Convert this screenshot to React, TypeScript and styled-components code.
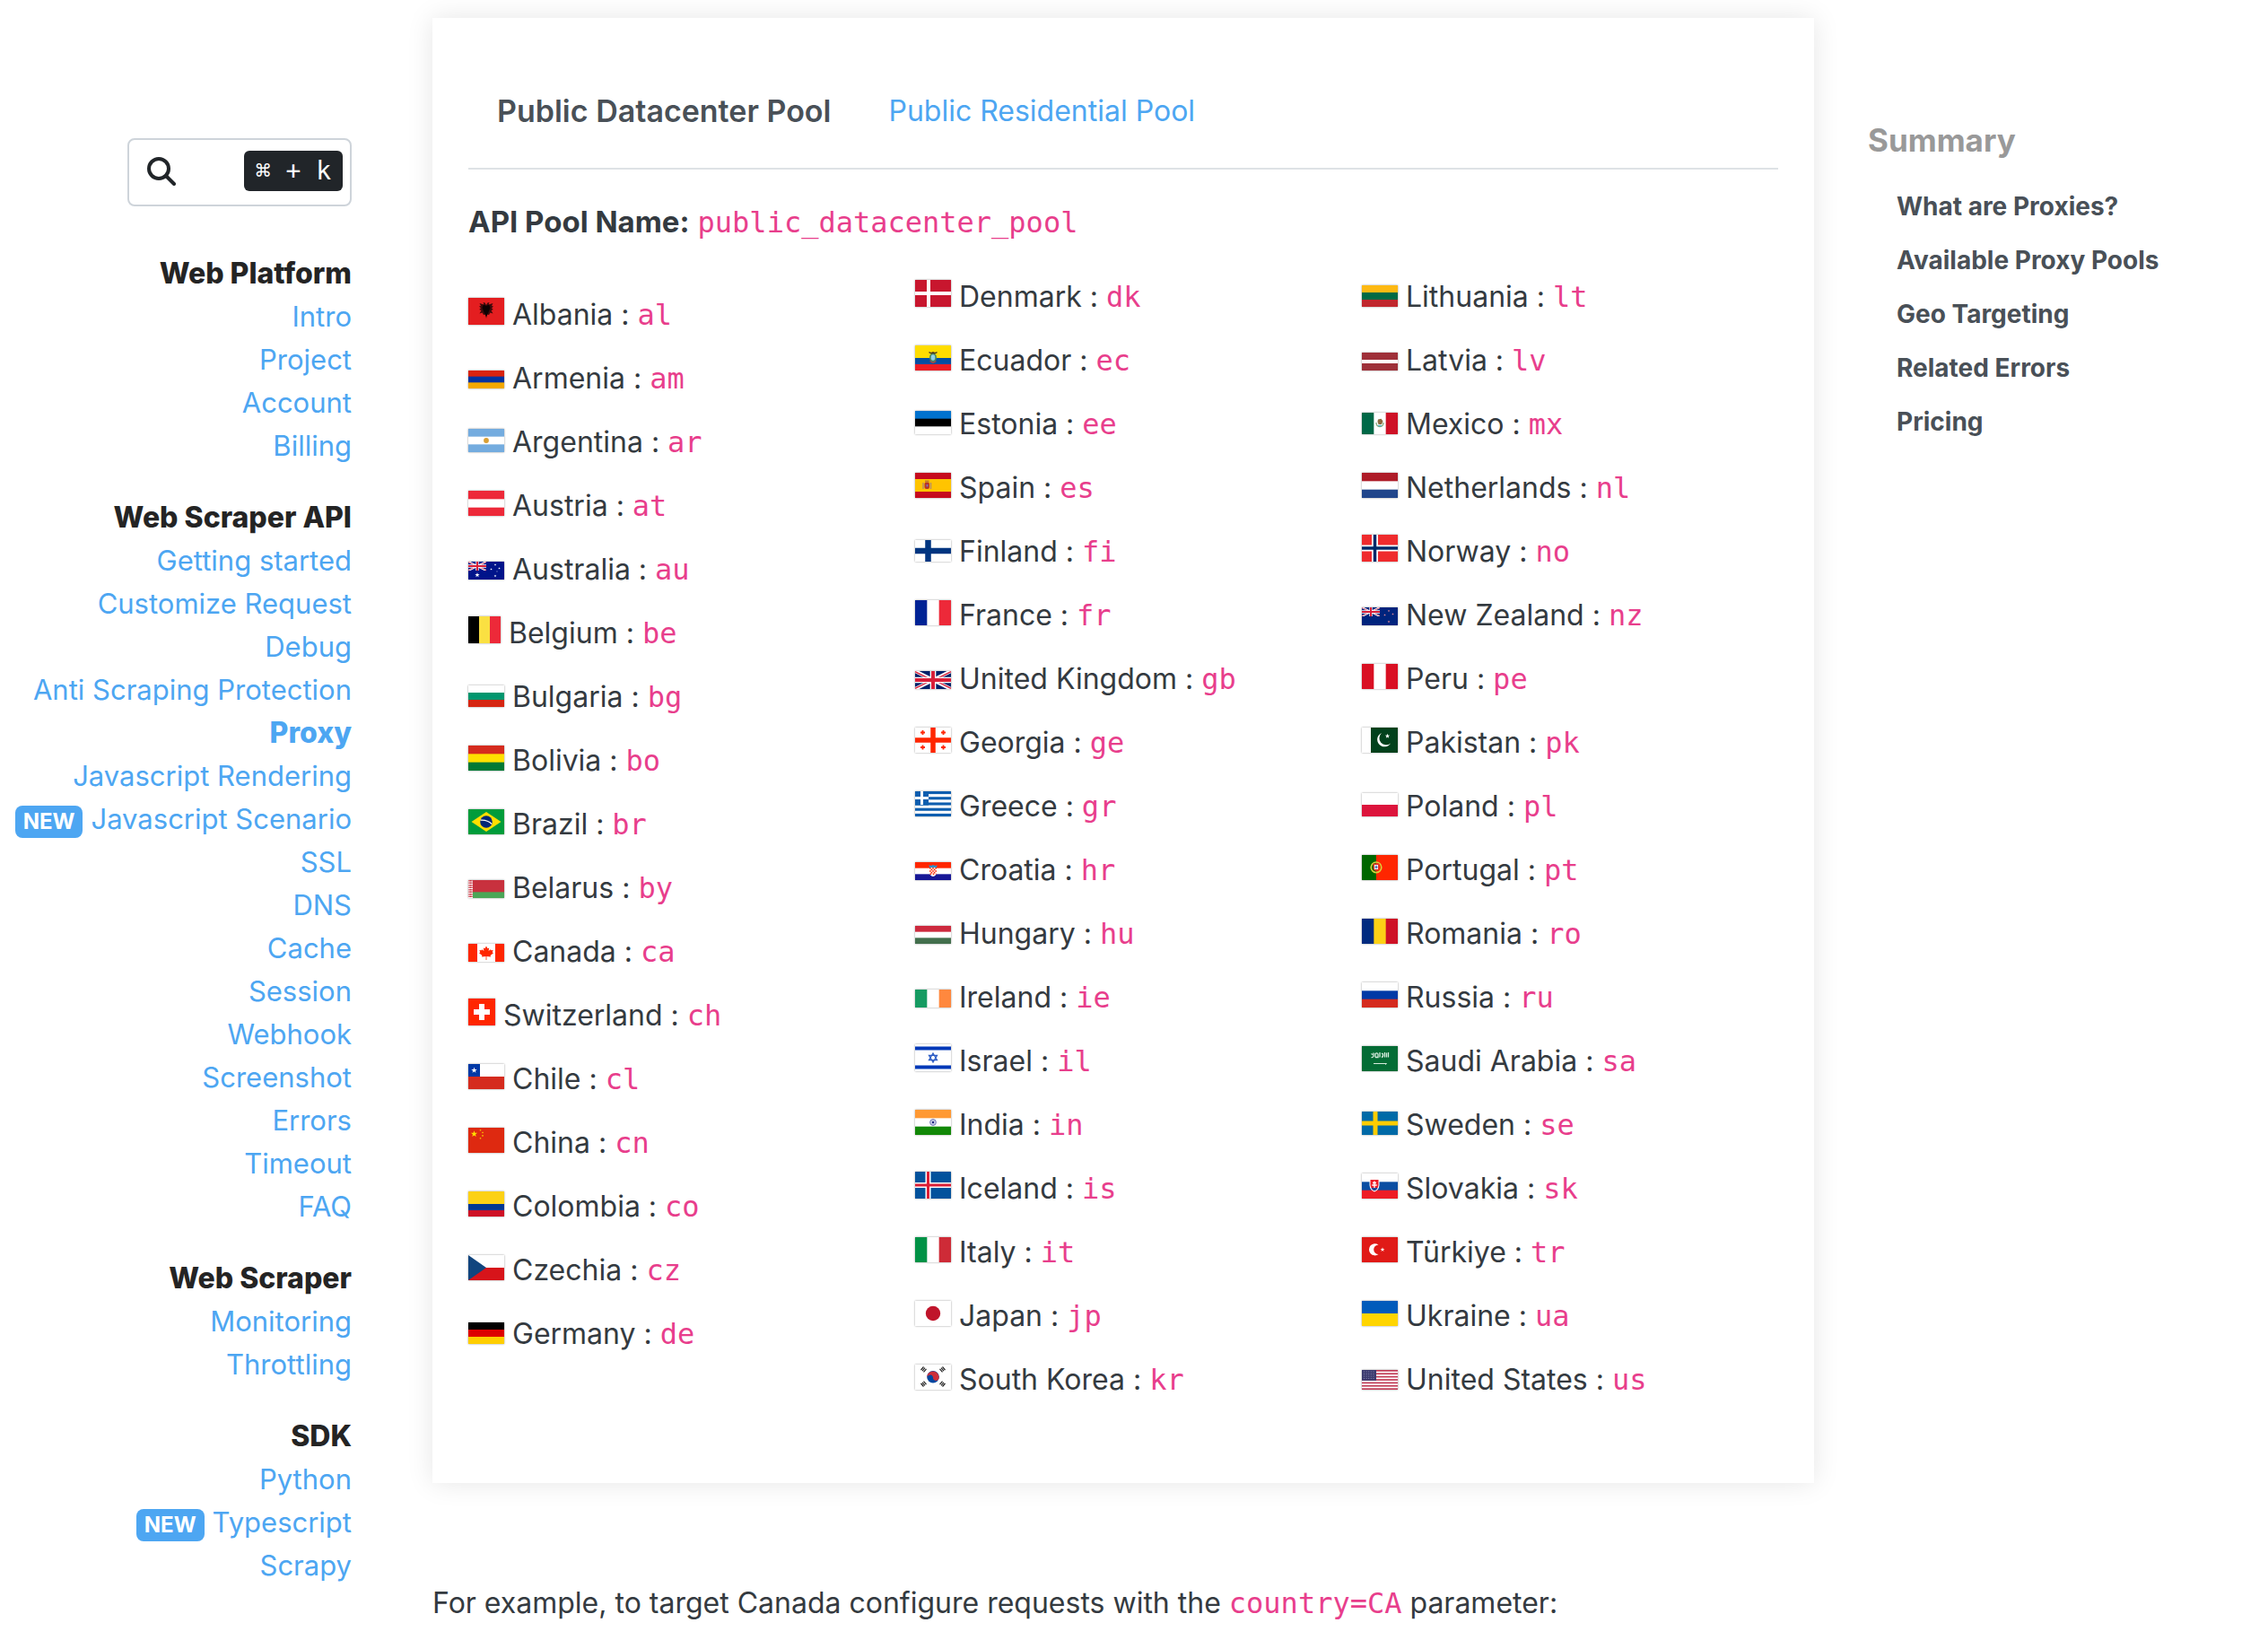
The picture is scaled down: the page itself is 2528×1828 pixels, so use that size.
import React from "react";
import styled, { createGlobalStyle } from "styled-components";

const sans = `Inter, "Liberation Sans", sans-serif`;
const mono = `"DejaVu Sans Mono", "Liberation Mono", monospace`;
const blue = "#4da6f2";

const GlobalStyle = createGlobalStyle`
  *, *::before, *::after { box-sizing: border-box; }
  body {
    margin: 0;
    background: #fff;
    color: #343a40;
    font-family: ${sans};
    font-size: 32px;
    line-height: 51px;
  }
`;

const Page = styled.div`
  display: grid;
  grid-template-columns: 392px minmax(0, 1fr) 506px;
  align-items: start;
`;

const Sidebar = styled.nav`
  display: flex;
  flex-direction: column;
  align-items: flex-end;
  padding-top: 154px;
  line-height: 48px;
`;

const SearchButton = styled.button`
  display: flex;
  align-items: center;
  justify-content: space-between;
  width: 250px;
  height: 76px;
  margin-bottom: 51px;
  padding: 0 8px 3px 20px;
  border: 2px solid #ced4da;
  border-radius: 8px;
  background: #fff;
  color: #212529;
  cursor: pointer;
`;

const Kbd = styled.kbd`
  display: block;
  padding: 6px 13px;
  border-radius: 6px;
  background: #212529;
  color: #fff;
  font-family: ${mono};
  font-size: 28px;
  line-height: 33px;
  white-space: pre;
`;

const NavGroup = styled.ul`
  margin: 0 0 32px;
  padding: 0;
  list-style: none;
  text-align: right;
`;

const NavHeading = styled.li`
  color: #242424;
  font-weight: 800;
`;

const NavItem = styled.li`
  display: flex;
  align-items: baseline;
  justify-content: flex-end;
  gap: 9px;
  white-space: nowrap;
`;

const TextLink = styled.a<{ $active?: boolean }>`
  color: ${blue};
  font-size: ${(p) => (p.$active ? 32 : 31)}px;
  font-weight: ${(p) => (p.$active ? 800 : 400)};
  text-decoration: none;
`;

const Badge = styled.span`
  padding: 6px 9px;
  border-radius: 8px;
  background: ${blue};
  color: #fff;
  font-size: 24px;
  font-weight: 700;
  line-height: 24px;
`;

const Main = styled.main`
  padding: 20px 0 0 90px;
`;

const Card = styled.section`
  padding: 40px;
  background: #fff;
  box-shadow: 0 0 28px rgba(0, 0, 0, 0.1);
`;

const Tabs = styled.div`
  display: flex;
  border-bottom: 2px solid #dee2e6;
`;

const Tab = styled.button<{ $active?: boolean }>`
  padding: 38px 32px;
  border: 0;
  background: none;
  color: ${(p) => (p.$active ? "#495057" : blue)};
  font-family: inherit;
  font-size: ${(p) => (p.$active ? 34 : 32)}px;
  font-weight: ${(p) => (p.$active ? 600 : 400)};
  line-height: inherit;
  cursor: pointer;
`;

const Paragraph = styled.p`
  margin: 33px 0 32px;
`;

const Strong = styled.strong`
  font-size: 33px;
  font-weight: 700;
`;

const Example = styled.p`
  margin: 108px 0 0;
`;

const Code = styled.code`
  color: #e83e8c;
  font-family: ${mono};
  font-size: 32px;
  line-height: 1;
`;

const CountryList = styled.ul`
  columns: 3;
  column-gap: 34px;
  margin: 0 0 47px;
  padding: 0;
  list-style: none;
`;

const Country = styled.li`
  height: 51px;
  margin: 20px 0;
  break-inside: avoid;
  white-space: nowrap;
`;

const FlagArt = styled.svg`
  box-shadow: 0 0 2px rgba(0, 0, 0, 0.4);
`;

const Aside = styled.aside`
  padding: 129px 0 0 60px;
`;

const SummaryTitle = styled.h2`
  margin: 0 0 26px;
  color: #999;
  font-size: 35px;
  font-weight: 700;
  line-height: 54px;
`;

const SummaryList = styled.ul`
  margin: 0;
  padding: 0 0 0 32px;
  list-style: none;
`;

const SummaryItem = styled.li`
  font-size: 28px;
  line-height: 42px;
  margin-bottom: 18px;
`;

const SummaryLink = styled.a`
  color: #495057;
  font-weight: 700;
  text-decoration: none;
`;

/* ---------- flag drawing helpers ---------- */

type Art = (w: number, h: number) => React.ReactNode;

/** Bands laid across (rows) or down (columns) the flag, in the given proportions. */
const bands = (vertical: boolean, colors: string[], parts?: number[]): Art => (w, h) => {
  const sizes = parts ?? colors.map(() => 1);
  const total = sizes.reduce((a, b) => a + b, 0);
  let at = 0;
  return colors.map((fill, i) => {
    const start = (at / total) * (vertical ? w : h);
    at += sizes[i];
    return vertical ? (
      <rect key={i} x={start} width={w - start} height={h} fill={fill} />
    ) : (
      <rect key={i} y={start} width={w} height={h - start} fill={fill} />
    );
  });
};
const rows = (colors: string[], parts?: number[]) => bands(false, colors, parts);
const cols = (colors: string[], parts?: number[]) => bands(true, colors, parts);

const over = (...layers: Art[]): Art => (w, h) =>
  layers.map((layer, i) => <React.Fragment key={i}>{layer(w, h)}</React.Fragment>);

const cross = (field: string, x: number, size: number, fill: string, inner?: string): Art => (w, h) => (
  <>
    <rect width={w} height={h} fill={field} />
    <rect x={x - size / 2} width={size} height={h} fill={fill} />
    <rect y={h / 2 - size / 2} width={w} height={size} fill={fill} />
    {inner && <rect x={x - size / 4} width={size / 2} height={h} fill={inner} />}
    {inner && <rect y={h / 2 - size / 4} width={w} height={size / 2} fill={inner} />}
  </>
);

const starPoints = (cx: number, cy: number, r: number, tips = 5) =>
  Array.from({ length: tips * 2 }, (_, i) => {
    const a = (Math.PI * i) / tips - Math.PI / 2;
    const d = i % 2 ? r * 0.4 : r;
    return `${(cx + d * Math.cos(a)).toFixed(2)},${(cy + d * Math.sin(a)).toFixed(2)}`;
  }).join(" ");

const Star = ({ x, y, r, fill }: { x: number; y: number; r: number; fill: string }) => (
  <polygon points={starPoints(x, y, r)} fill={fill} />
);

const UnionJack = ({ w, h, field = "#012169" }: { w: number; h: number; field?: string }) => (
  <svg width={w} height={h} viewBox="0 0 60 30" preserveAspectRatio="none">
    <rect width="60" height="30" fill={field} />
    <path d="M0 0L60 30M60 0L0 30" stroke="#fff" strokeWidth="6" />
    <path d="M0 1L30 16M60 29L30 14M60 1L30 16M0 29L30 14" stroke="#d8203a" strokeWidth="2" />
    <path d="M30 0V30M0 15H60" stroke="#fff" strokeWidth="10" />
    <path d="M30 0V30M0 15H60" stroke="#d8203a" strokeWidth="6" />
  </svg>
);

const southernSky = (field: string, star: string, big: boolean): Art => (w, h) => (
  <>
    <rect width={w} height={h} fill={field} />
    <UnionJack w={w / 2} h={h / 2} field={field} />
    {big && <Star x={10} y={15} r={2.8} fill="#fff" />}
    <Star x={30} y={big ? 3.5 : 4} r={1.3} fill={star} />
    <Star x={25.5} y={8.5} r={1.3} fill={star} />
    <Star x={34.5} y={7.5} r={1.3} fill={star} />
    <Star x={30} y={16} r={1.5} fill={star} />
    {big && <Star x={32} y={11} r={0.8} fill={star} />}
  </>
);

const albania: Art = (w, h) => (
  <>
    <rect width={w} height={h} fill="#e41e20" />
    <path
      d="M20 8L18.5 5.5L16.5 5L17.5 7.5L12.5 6L14 9L12 9.5L14 11.5L12.2 13L14.5 14L12.5 17.5L15.5 16.5L17 19L19 18.5L20 23L21 18.5L23 19L24.5 16.5L27.5 17.5L25.5 14L27.8 13L26 11.5L28 9.5L26 9L27.5 6L22.5 7.5L23.5 5L21.5 5.5Z"
      fill="#3d0a0b"
    />
    <path d="M20 9L17 7.5L15.5 11L17.5 16L20 21L22.5 16L24.5 11L23 7.5Z" fill="#0c0203" />
  </>
);

const brazil: Art = (w, h) => (
  <>
    <rect width={w} height={h} fill="#009c3b" />
    <path d={`M20 3L36.5 ${h / 2}L20 ${h - 3}L3.5 ${h / 2}Z`} fill="#ffdf00" />
    <circle cx="20" cy={h / 2} r="6.8" fill="#002776" />
    <path d="M13.6 12.2Q21 11.5 26.2 16.5" stroke="#fff" strokeWidth="1.2" fill="none" />
  </>
);

const belarus: Art = (w, h) => (
  <>
    <rect width={w} height={h} fill="#c8313e" />
    <rect y={(h * 2) / 3} width={w} height={h / 3} fill="#4aa657" />
    <rect width="5" height={h} fill="#fff" />
    <path d="M1 0V20M4 0V20M2.5 0V20" stroke="#c8313e" strokeWidth="1.3" strokeDasharray="1.5 1" />
  </>
);

const canada: Art = (w, h) => (
  <>
    <rect width={w} height={h} fill="#fff" />
    <path d={`M0 0H10V${h}H0ZM30 0H40V${h}H30Z`} fill="#ff2600" />
    <path
      d="M20 2.5L21.5 5.2L23.2 4.4L22.6 8L24.8 6.2L25.3 7.3L27.6 7L26.8 9.5L28 10.2L24.6 13L25 14.5L20.4 14V18H19.6V14L15 14.5L15.4 13L12 10.2L13.2 9.5L12.4 7L14.7 7.3L15.2 6.2L17.4 8L16.8 4.4L18.5 5.2Z"
      fill="#ff2600"
    />
  </>
);

const switzerland: Art = (w, h) => (
  <>
    <rect width={w} height={h} fill="#ff2600" />
    <path d="M15 6V24M6 15H24" stroke="#fff" strokeWidth="6" />
  </>
);

const chile: Art = (w, h) => (
  <>
    <rect width={w} height={h} fill="#fff" />
    <rect y={h / 2} width={w} height={h / 2} fill="#d52b1e" />
    <rect width="13" height={h / 2} fill="#0039a6" />
    <Star x={6.5} y={7} r={3.4} fill="#fff" />
  </>
);

const china: Art = (w, h) => (
  <>
    <rect width={w} height={h} fill="#de2910" />
    <Star x={6.5} y={7} r={3.8} fill="#ffde00" />
    <Star x={13.5} y={2.8} r={1.3} fill="#ffde00" />
    <Star x={16} y={5.3} r={1.3} fill="#ffde00" />
    <Star x={16} y={9} r={1.3} fill="#ffde00" />
    <Star x={13.5} y={11.8} r={1.3} fill="#ffde00" />
  </>
);

const czech: Art = (w, h) => (
  <>
    <rect width={w} height={h} fill="#fff" />
    <rect y={h / 2} width={w} height={h / 2} fill="#d7141a" />
    <path d={`M0 0L20 ${h / 2}L0 ${h}Z`} fill="#11457e" />
  </>
);

const ecuadorArms: Art = () => (
  <>
    <ellipse cx="20" cy="13.5" rx="4" ry="5" fill="#4f8a5b" />
    <ellipse cx="20" cy="13.5" rx="2.3" ry="3.2" fill="#8fd0e8" />
    <path d="M15.5 7.5Q18 9.5 20 8Q22 9.5 24.5 7.5" stroke="#4a3a20" strokeWidth="1.6" fill="none" />
    <path d="M16.5 17.5L20 19.5L23.5 17.5" stroke="#b5473a" strokeWidth="1.2" fill="none" />
  </>
);

const spainArms: Art = () => (
  <>
    <path d="M9 11V18M17.5 11V18" stroke="#b58a6a" strokeWidth="1.4" />
    <rect x="10.5" y="10.5" width="5.5" height="7.5" rx="2" fill="#b5352c" />
    <rect x="11" y="8.5" width="4.5" height="2" fill="#c47a2c" />
    <rect x="12.5" y="13" width="2" height="2.5" fill="#7a6fb0" />
  </>
);

const georgia: Art = (w, h) => (
  <>
    {cross("#fff", 20, 5.5, "#ff2600")(w, h)}
    <path
      d="M6 5.5H11M8.5 3V8M29 5.5H34M31.5 3V8M6 22H11M8.5 19.500V24.500M29 22H34M31.5 19.500V24.500"
      stroke="#ff2600"
      strokeWidth="1.8"
    />
  </>
);

const greece: Art = (w, h) => (
  <>
    {rows(Array.from({ length: 9 }, (_, i) => (i % 2 ? "#fff" : "#0d5eaf")))(w, h)}
    <rect width="15" height={(h * 5) / 9} fill="#0d5eaf" />
    <path d="M7.5 0V15M0 7.5H15" stroke="#fff" strokeWidth="3" />
  </>
);

const croatiaArms: Art = () => (
  <>
    <path d="M15.5 3L17.5 4L20 3L22.5 4L24.5 3L24 6.5H16Z" fill="#2f8fc6" />
    <path d="M16 6H24V12Q23.5 15 20 16Q16.5 15 16 12Z" fill="#fff" />
    <path
      d="M16 6.8H24M16 10H24M16.5 13.2H23.5"
      stroke="#ff2600"
      strokeWidth="1.6"
      strokeDasharray="1.6 1.6"
    />
    <path d="M17.6 8.4H24M17.6 11.6H23" stroke="#ff2600" strokeWidth="1.6" strokeDasharray="1.6 1.6" />
  </>
);

const israel: Art = (w, h) => (
  <>
    <rect width={w} height={h} fill="#fff" />
    <path d={`M0 4.5H40M0 ${h - 4.5}H40`} stroke="#0038b8" strokeWidth="4" />
    <path
      d="M20 10L24.5 17.700H15.5ZM20 20L15.5 12.300H24.5Z"
      stroke="#2c5cc5"
      strokeWidth="1.3"
      fill="none"
    />
  </>
);

const indiaWheel: Art = (w, h) => (
  <>
    <circle cx="20" cy={h / 2} r="3.4" fill="#c9cde8" stroke="#5a62b0" strokeWidth="0.8" />
    <circle cx="20" cy={h / 2} r="1.2" fill="#1a237e" />
  </>
);

const japan: Art = (w, h) => (
  <>
    <rect width={w} height={h} fill="#fff" />
    <circle cx="20" cy={h / 2} r="8.2" fill="#c0152b" />
  </>
);

const korea: Art = (w, h) => (
  <>
    <rect width={w} height={h} fill="#fff" />
    <circle cx="20" cy="13.8" r="6.8" fill="#0047a0" />
    <path
      d="M13.5 12A6.8 6.8 0 0 1 26.6 15.5A3.4 3.4 0 0 1 20 14A3.4 3.4 0 0 0 13.5 16Z"
      fill="#cd2e3a"
    />
    <path
      d="M6.5 6L9.5 2.5M8 7.2L11 3.7M9.5 8.4L12.5 4.9M33.5 6L30.5 2.5M32 7.2L29 3.7M30.5 8.4L27.5 4.9M6.5 21L9.5 24.5M8 19.8L11 23.3M9.5 18.6L12.5 22.1M33.5 21L30.5 24.5M32 19.8L29 23.3M30.5 18.6L27.5 22.1"
      stroke="#222"
      strokeWidth="1.2"
    />
  </>
);

const mexicoArms: Art = () => (
  <>
    <path d="M16 11Q16 15.5 20 15.5Q24 15.5 24 11" stroke="#7fa878" strokeWidth="1.3" fill="none" />
    <path d="M18 7.5L21.5 6.8L23.5 9.5L22 13L18.5 13L17.5 10Z" fill="#8c6a3f" />
    <path d="M18 14.5H22" stroke="#5fb5c4" strokeWidth="1.5" />
  </>
);

const pakistan: Art = (w, h) => (
  <>
    <rect width={w} height={h} fill="#01411c" />
    <rect width="10" height={h} fill="#fff" />
    <path d="M22 6A8 8 0 1 0 32 17.5A7.5 7.5 0 1 1 22 6Z" fill="#fff" />
    <Star x={28.5} y={9.5} r={2.8} fill="#fff" />
  </>
);

const portugalArms: Art = () => (
  <>
    <circle cx="16" cy="13.8" r="5.8" fill="none" stroke="#d9d23a" strokeWidth="1.6" />
    <path d="M12.5 9.5H19.5V14Q19.5 17.5 16 18Q12.5 17.5 12.5 14Z" fill="#e5352a" />
    <rect x="14" y="11" width="4" height="5" fill="#fff" />
    <path d="M16 11.5V15.5M14.5 13.5H17.5" stroke="#2b52a5" strokeWidth="1" />
  </>
);

const saudi: Art = (w, h) => (
  <>
    <rect width={w} height={h} fill="#046c35" />
    <path
      d="M10.5 12.5Q12 13 13 11.5V7.5M15 12.5V8.5Q17 7 18 9V12.5H15M20 7V12.5M22 12.5Q24 12 23.5 9L22 8M25.5 7V12.5M27.5 7.5V12.5M29.5 7V12.5M10.5 8.5L12 9.5"
      stroke="#d6ebdd"
      strokeWidth="1.3"
      fill="none"
    />
    <path d="M13 19.5H27.5L26 20.5" stroke="#d6ebdd" strokeWidth="1" fill="none" />
  </>
);

const slovakiaArms: Art = () => (
  <>
    <path d="M8.5 6H19.5V13Q19 18.5 14 20.5Q9 18.5 8.5 13Z" fill="#fff" />
    <path d="M9.5 7H18.5V13Q18 17.5 14 19.3Q10 17.5 9.5 13Z" fill="#ee1c25" />
    <path d="M14 8.5V16M12 10.5H16M11.3 13H16.7" stroke="#fff" strokeWidth="1.3" />
    <path d="M10.5 16.5Q12 15 14 16.5Q16 15 17.5 16.5Q16 18.5 14 19.3Q12 18.5 10.5 16.5Z" fill="#0b4ea2" />
  </>
);

const turkey: Art = (w, h) => (
  <>
    <rect width={w} height={h} fill="#e01a17" />
    <path d="M18.5 8.5A6.6 6.6 0 1 0 18.5 19.1A5.3 5.3 0 1 1 18.5 8.5Z" fill="#fff" />
    <Star x={23} y={13.8} r={2.6} fill="#fff" />
  </>
);

const usa: Art = (w, h) => (
  <>
    {rows(Array.from({ length: 13 }, (_, i) => (i % 2 ? "#fff" : "#bf3a54")))(w, h)}
    <rect width="16" height={(h * 7) / 13} fill="#3c3b6e" />
    <path
      d="M2 2H15M2 4.5H15M2 7H15M2 9.5H15"
      stroke="#8f8fb5"
      strokeWidth="0.9"
      strokeDasharray="1 1.6"
    />
  </>
);

const argentinaSun: Art = (w, h) => <circle cx="20" cy={h / 2} r="2.9" fill="#d9a036" />;

type CountryData = [name: string, code: string, height: number, art: Art, width?: number];

const countries: CountryData[] = [
  ["Albania", "al", 30, albania],
  ["Armenia", "am", 20, rows(["#d9230f", "#0033a0", "#f2a800"])],
  ["Argentina", "ar", 26, over(rows(["#74acdf", "#fff", "#74acdf"]), argentinaSun)],
  ["Austria", "at", 28, rows(["#ed2939", "#fff", "#ed2939"])],
  ["Australia", "au", 20, southernSky("#00148a", "#fff", true)],
  ["Belgium", "be", 30, cols(["#000", "#fae042", "#ed2939"]), 36],
  ["Bulgaria", "bg", 24, rows(["#fff", "#00966e", "#d62612"])],
  ["Bolivia", "bo", 28, rows(["#d52b1e", "#ffe000", "#007934"])],
  ["Brazil", "br", 28, brazil],
  ["Belarus", "by", 20, belarus],
  ["Canada", "ca", 20, canada],
  ["Switzerland", "ch", 30, switzerland, 30],
  ["Chile", "cl", 28, chile],
  ["China", "cn", 28, china],
  ["Colombia", "co", 28, rows(["#fcd116", "#003893", "#ce1126"], [2, 1, 1])],
  ["Czechia", "cz", 28, czech],
  ["Germany", "de", 24, rows(["#000", "#d00", "#ffce00"])],
  ["Denmark", "dk", 30, cross("#c8162e", 15, 4, "#fff")],
  ["Ecuador", "ec", 28, over(rows(["#fd0", "#034ea2", "#ed1c24"], [2, 1, 1]), ecuadorArms)],
  ["Estonia", "ee", 26, rows(["#0072ce", "#000", "#fff"])],
  ["Spain", "es", 28, over(rows(["#c60b1e", "#ffc400", "#c60b1e"], [1, 2, 1]), spainArms)],
  ["Finland", "fi", 24, cross("#fff", 14.5, 6.5, "#003580")],
  ["France", "fr", 28, cols(["#002395", "#fff", "#ed2939"])],
  ["United Kingdom", "gb", 20, (w, h) => <UnionJack w={w} h={h} />],
  ["Georgia", "ge", 28, georgia],
  ["Greece", "gr", 28, greece],
  ["Croatia", "hr", 20, over(rows(["#ff2600", "#fff", "#171796"]), croatiaArms)],
  ["Hungary", "hu", 20, rows(["#cd2a3e", "#fff", "#436f4d"])],
  ["Ireland", "ie", 20, cols(["#169b62", "#fff", "#ff883e"])],
  ["Israel", "il", 30, israel],
  ["India", "in", 28, over(rows(["#f93", "#fff", "#128807"]), indiaWheel)],
  ["Iceland", "is", 30, cross("#02529c", 14.5, 6, "#fff", "#dc1e35")],
  ["Italy", "it", 28, cols(["#009246", "#fff", "#ce2b37"])],
  ["Japan", "jp", 28, japan],
  ["South Korea", "kr", 28, korea],
  ["Lithuania", "lt", 24, rows(["#fdb913", "#006a44", "#c1272d"])],
  ["Latvia", "lv", 20, rows(["#9e3039", "#fff", "#9e3039"], [2, 1, 2])],
  ["Mexico", "mx", 24, over(cols(["#006847", "#fff", "#ce1126"]), mexicoArms)],
  ["Netherlands", "nl", 28, rows(["#ae1c28", "#fff", "#21468b"])],
  ["Norway", "no", 30, cross("#ef2b2d", 14.5, 7, "#fff", "#002868")],
  ["New Zealand", "nz", 20, southernSky("#00247d", "#e98a94", false)],
  ["Peru", "pe", 28, cols(["#d91023", "#fff", "#d91023"])],
  ["Pakistan", "pk", 28, pakistan],
  ["Poland", "pl", 26, rows(["#fff", "#dc143c"])],
  ["Portugal", "pt", 28, over(cols(["#060", "#ff2600"], [2, 3]), portugalArms)],
  ["Romania", "ro", 28, cols(["#002b7f", "#fcd116", "#ce1126"])],
  ["Russia", "ru", 28, rows(["#fff", "#0039a6", "#d52b1e"])],
  ["Saudi Arabia", "sa", 28, saudi],
  ["Sweden", "se", 26, cross("#006aa7", 15, 5, "#fecc00")],
  ["Slovakia", "sk", 28, over(rows(["#fff", "#0b4ea2", "#ee1c25"]), slovakiaArms)],
  ["Türkiye", "tr", 28, turkey],
  ["Ukraine", "ua", 28, rows(["#005bbb", "#ffd500"])],
  ["United States", "us", 22, usa],
];

const Flag = ({ art, width = 40, height }: { art: Art; width?: number; height: number }) => (
  <FlagArt width={width} height={height} viewBox={`0 0 ${width} ${height}`} aria-hidden="true">
    {art(width, height)}
  </FlagArt>
);

/* ---------- navigation data ---------- */

type Link = { label: string; isNew?: boolean; active?: boolean };

const nav: { title: string; links: Link[] }[] = [
  {
    title: "Web Platform",
    links: [{ label: "Intro" }, { label: "Project" }, { label: "Account" }, { label: "Billing" }],
  },
  {
    title: "Web Scraper API",
    links: [
      { label: "Getting started" },
      { label: "Customize Request" },
      { label: "Debug" },
      { label: "Anti Scraping Protection" },
      { label: "Proxy", active: true },
      { label: "Javascript Rendering" },
      { label: "Javascript Scenario", isNew: true },
      { label: "SSL" },
      { label: "DNS" },
      { label: "Cache" },
      { label: "Session" },
      { label: "Webhook" },
      { label: "Screenshot" },
      { label: "Errors" },
      { label: "Timeout" },
      { label: "FAQ" },
    ],
  },
  { title: "Web Scraper", links: [{ label: "Monitoring" }, { label: "Throttling" }] },
  {
    title: "SDK",
    links: [{ label: "Python" }, { label: "Typescript", isNew: true }, { label: "Scrapy" }],
  },
];

const summary = [
  "What are Proxies?",
  "Available Proxy Pools",
  "Geo Targeting",
  "Related Errors",
  "Pricing",
];

const SearchIcon = () => (
  <svg width="32" height="32" viewBox="0 0 32 32" fill="none" stroke="currentColor" strokeWidth="4" aria-hidden="true">
    <circle cx="13" cy="13" r="11" />
    <path d="M21 21L30 30" strokeLinecap="round" />
  </svg>
);

export default function App() {
  return (
    <>
      <GlobalStyle />
      <Page>
        <Sidebar aria-label="Documentation">
          <SearchButton type="button" aria-label="Search">
            <SearchIcon />
            <Kbd>⌘ + k</Kbd>
          </SearchButton>
          {nav.map((group) => (
            <NavGroup key={group.title}>
              <NavHeading>{group.title}</NavHeading>
              {group.links.map((link) => (
                <NavItem key={link.label}>
                  {link.isNew && <Badge>NEW</Badge>}
                  <TextLink href="#" $active={link.active}>
                    {link.label}
                  </TextLink>
                </NavItem>
              ))}
            </NavGroup>
          ))}
        </Sidebar>

        <Main>
          <Card>
            <Tabs role="tablist">
              <Tab type="button" role="tab" aria-selected="true" $active>
                Public Datacenter Pool
              </Tab>
              <Tab type="button" role="tab" aria-selected="false">
                Public Residential Pool
              </Tab>
            </Tabs>
            <Paragraph>
              <Strong>API Pool Name:</Strong> <Code>public_datacenter_pool</Code>
            </Paragraph>
            <CountryList>
              {countries.map(([name, code, height, art, width]) => (
                <Country key={code}>
                  <Flag art={art} width={width} height={height} /> {name} : <Code>{code}</Code>
                </Country>
              ))}
            </CountryList>
          </Card>
          <Example>
            For example, to target Canada configure requests with the <Code>country=CA</Code> parameter:
          </Example>
        </Main>

        <Aside>
          <SummaryTitle>Summary</SummaryTitle>
          <SummaryList>
            {summary.map((item) => (
              <SummaryItem key={item}>
                <SummaryLink href="#">{item}</SummaryLink>
              </SummaryItem>
            ))}
          </SummaryList>
        </Aside>
      </Page>
    </>
  );
}
